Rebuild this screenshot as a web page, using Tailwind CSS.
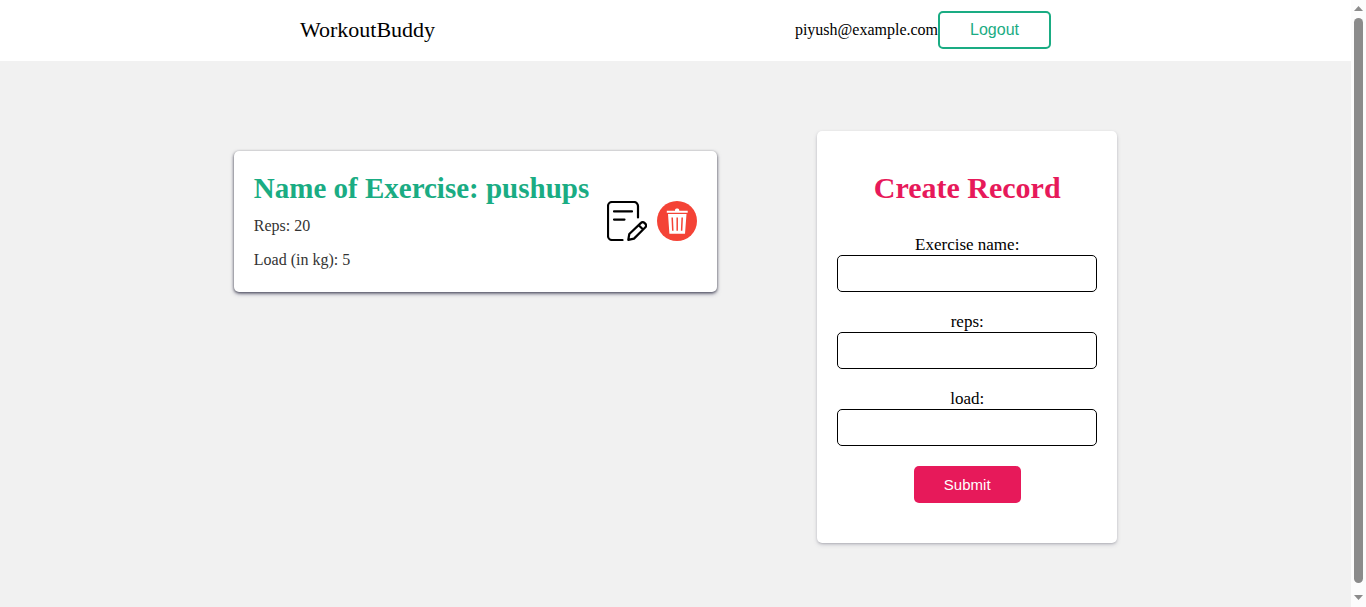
<!DOCTYPE html>
<html lang="en">
<head>
<meta charset="utf-8">
<meta name="viewport" content="width=device-width, initial-scale=1">
<title>WorkoutBuddy</title>
<script src="https://cdn.jsdelivr.net/npm/@tailwindcss/browser@4"></script>
</head>
<body class="flex min-h-screen bg-[#f1f1f1] font-['Liberation_Serif',serif] text-black">
  <div class="flex-1">
    <header class="bg-white px-4">
      <div class="mx-auto flex max-w-[751px] items-center justify-between pt-[11px] pb-3">
        <a href="#" class="text-[22px] leading-6">WorkoutBuddy</a>
        <div class="flex items-center">
          <span class="text-base">piyush@example.com</span>
          <button type="button" class="rounded-[5px] border-2 border-[#1aac83] px-[30px] py-2 font-['Liberation_Sans',sans-serif] text-base leading-[18px] text-[#1aac83]">Logout</button>
        </div>
      </div>
    </header>
    <main class="flex flex-wrap items-start justify-center gap-x-[100px] gap-y-10 px-4 py-[70px] lg:flex-nowrap">
      <article class="mt-5 flex items-start gap-[18px] rounded-[5px] bg-white p-5 shadow-[0_2px_5px_-1px_rgba(50,50,93,0.6),0_1px_3px_rgba(0,0,0,0.6)]">
        <div class="pb-[3px]">
          <h2 class="mb-3 text-[29px] leading-[34px] font-bold text-[#1aac83]">Name of Exercise: pushups</h2>
          <p class="mb-4 text-base leading-[18px] text-[#333]">Reps: 20</p>
          <p class="text-base leading-[18px] text-[#333]">Load (in kg): 5</p>
        </div>
        <div class="mt-[30px] flex gap-2.5">
          <button type="button" aria-label="Edit" class="size-10">
            <svg viewBox="0 0 40 40" class="size-10" fill="none" stroke="#000" stroke-width="2.200" stroke-linecap="round" stroke-linejoin="round">
              <path d="M31 16.500V5a4 4 0 0 0-4-4H5a4 4 0 0 0-4 4v30a4 4 0 0 0 4 4h10.500M7 10.400h18M7 18.600h10.500"/>
              <path d="M21.300 38.800l1-5.800L34 21.900a2.400 2.400 0 0 1 3.400 0l1 1a2.400 2.400 0 0 1 0 3.400L27 37.600zM31.700 24.200l4.400 4.300"/>
            </svg>
          </button>
          <button type="button" aria-label="Delete" class="size-10">
            <svg viewBox="0 0 40 40" class="size-10">
              <circle cx="20" cy="20" r="20" fill="#f44336"/>
              <path fill="#fff" d="M9.800 9.800h8.200v-.8a1.500 1.500 0 0 1 1.500-1.500h1.200a1.500 1.500 0 0 1 1.500 1.500v.8h8.500v2H9.800zM11 13h18.500L28 32.800H12.400z"/>
              <path fill="none" stroke="#f44336" stroke-width="1.500" d="M15.200 16.500l.6 13.300M20.200 16.500v13.300M25.200 16.500l-.6 13.300"/>
            </svg>
          </button>
        </div>
      </article>
      <form class="flex w-[300px] flex-col items-center rounded-[5px] bg-white px-5 py-10 shadow-[0_2px_5px_-1px_rgba(50,50,93,0.25),0_1px_3px_-1px_rgba(0,0,0,0.3)]">
        <h2 class="mb-[30px] text-[30px] leading-[34px] font-bold text-[#e7195a]">Create Record</h2>
        <label for="name" class="text-[17px] leading-5">Exercise name:</label>
        <input id="name" type="text" class="mb-5 h-[37px] w-full rounded-[5px] border border-black bg-white px-2.5">
        <label for="reps" class="text-[17px] leading-5">reps:</label>
        <input id="reps" type="text" class="mb-5 h-[37px] w-full rounded-[5px] border border-black bg-white px-2.5">
        <label for="load" class="text-[17px] leading-5">load:</label>
        <input id="load" type="text" class="mb-5 h-[37px] w-full rounded-[5px] border border-black bg-white px-2.5">
        <button type="submit" class="rounded-[5px] bg-[#e7195a] px-[30px] py-2.5 font-['Liberation_Sans',sans-serif] text-[15px] leading-[17px] text-white">Submit</button>
      </form>
    </main>
  </div>
  <!-- Scroll track -->
  <div aria-hidden="true" class="sticky top-0 flex h-screen w-[15px] shrink-0 flex-col items-center bg-[#fcfcfc] pt-1.5 pb-[7px]">
    <svg viewBox="0 0 9 5" class="h-[5px] w-[9px]"><path d="M4.500 0L9 5H0z" fill="#8b8b8b"/></svg>
    <div class="mt-[7px] mb-3 w-[9px] flex-1 rounded-full bg-[#8b8b8b]"></div>
    <svg viewBox="0 0 9 5" class="h-[5px] w-[9px]"><path d="M0 0h9L4.500 5z" fill="#8b8b8b"/></svg>
  </div>
</body>
</html>
